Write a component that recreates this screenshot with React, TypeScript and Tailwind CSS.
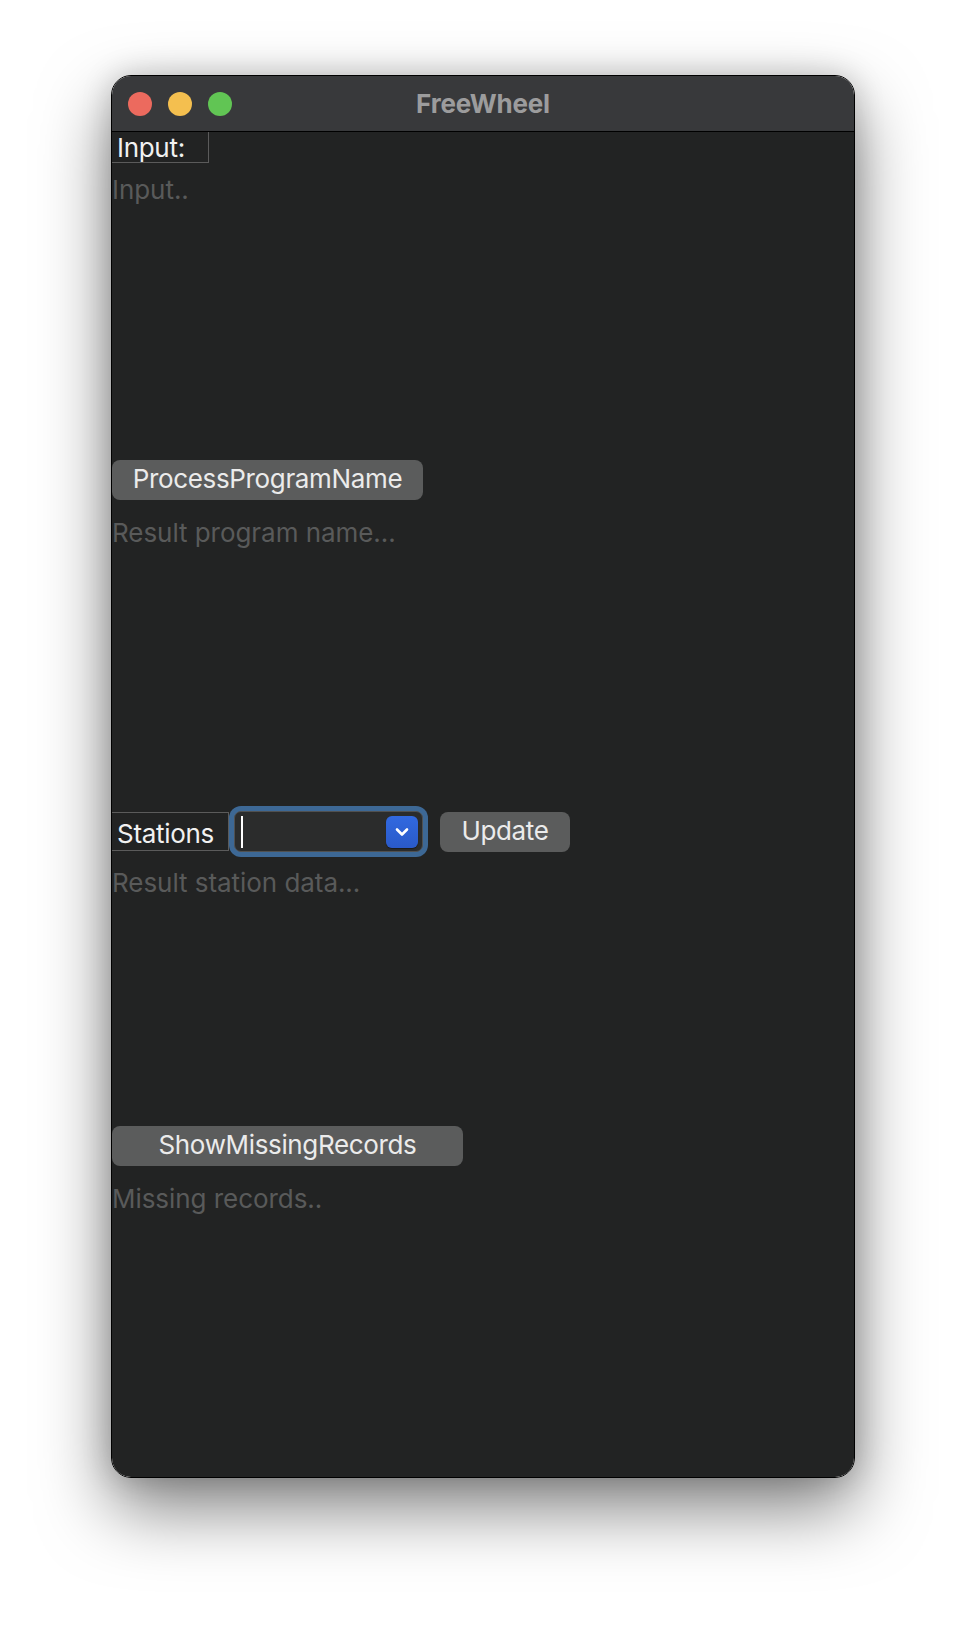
import React from "react";

/* Small macOS-style window with a few form controls (FreeWheel tool). */

const FONT = "font-['Inter','Noto_Sans',sans-serif]";

function TrafficLights() {
  return (
    <div className="flex items-center gap-[16px] pl-[16px]">
      <span className="h-[24px] w-[24px] rounded-full bg-[#ec6a5e]" />
      <span className="h-[24px] w-[24px] rounded-full bg-[#f4bf4f]" />
      <span className="h-[24px] w-[24px] rounded-full bg-[#61c554]" />
    </div>
  );
}

function MacButton({ label, width }: { label: string; width: string }) {
  return (
    <button
      className={`flex h-[40px] ${width} items-center justify-center rounded-[8px] bg-[#5b5c5c] pb-[3px] text-[26px] leading-[31px] tracking-[-0.35px] text-[#ebebeb]`}
    >
      {label}
    </button>
  );
}

function Placeholder({ text }: { text: string }) {
  return <p className="text-[26px] leading-[31px] tracking-[-0.05px] text-[#595a5a]">{text}</p>;
}

export default function App() {
  return (
    <div className={`h-[1626px] w-[966px] bg-white pl-[111px] pt-[75px] ${FONT}`}>
      <div className="flex h-[1403px] w-[744px] flex-col overflow-hidden rounded-[20px] border border-black shadow-[0_30px_70px_rgba(0,0,0,0.5),0_0_30px_rgba(0,0,0,0.18),inset_0_1px_0_rgba(255,255,255,0.18)]">
        {/* Title bar */}
        <div className="relative flex h-[56px] shrink-0 items-center border-b border-black bg-[#38393b]">
          <TrafficLights />
          <div className="absolute inset-0 flex items-center justify-center">
            <span className="text-[26px] font-bold leading-none tracking-[-0.2px] text-[#9c9c9d]">FreeWheel</span>
          </div>
        </div>

        {/* Content */}
        <div className="flex flex-1 flex-col bg-[#222323]">
          <div className="h-[31px] w-[97px] border-b border-r border-[#5b5b5b] pl-[5px] text-[26px] leading-[31px] tracking-[-0.3px] text-[#f1f1f1]">
            Input:
          </div>
          <div className="h-[297px] pt-[11px]">
            <Placeholder text="Input.." />
          </div>

          <MacButton label="ProcessProgramName" width="w-[311px]" />
          <div className="h-[306px] pt-[17px]">
            <Placeholder text="Result program name..." />
          </div>

          {/* Stations row */}
          <div className="flex h-[51px] items-center">
            <div className="h-[39px] w-[117px] border-y border-r border-[#5b5b5b] pl-[5px] pt-[3px] text-[26px] leading-[35px] tracking-[-0.3px] text-[#f1f1f1]">
              Stations
            </div>
            <div className="h-[51px] w-[199px] rounded-[12px] bg-[#3d6895] p-[5px]">
              <div className="flex h-full items-center rounded-[7px] border border-[#505151] bg-[#2b2c2c] pl-[6px] pr-[4px]">
                <span className="h-[32px] w-[2px] bg-white" />
                <div className="flex-1" />
                <span className="flex h-[32px] w-[32px] items-center justify-center rounded-[6px] bg-gradient-to-b from-[#3169e0] to-[#2a5ac9] shadow-[0_1px_1px_rgba(0,0,0,0.4)]">
                  <svg width="16" height="10" viewBox="0 0 16 10" fill="none">
                    <polyline points="3,2.5 8,7.5 13,2.5" stroke="white" strokeWidth="2.6" strokeLinecap="round" strokeLinejoin="round" />
                  </svg>
                </span>
              </div>
            </div>
            <div className="ml-[12px]">
              <MacButton label="Update" width="w-[130px]" />
            </div>
          </div>
          <div className="h-[269px] pt-[10px]">
            <Placeholder text="Result station data..." />
          </div>

          <MacButton label="ShowMissingRecords" width="w-[351px]" />
          <div className="pt-[17px]">
            <Placeholder text="Missing records.." />
          </div>
        </div>
      </div>
    </div>
  );
}
